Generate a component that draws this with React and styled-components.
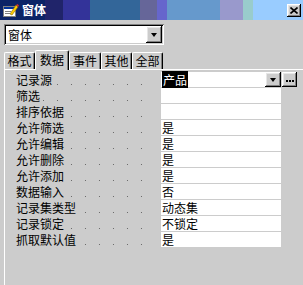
import React from 'react';
import styled, { createGlobalStyle } from 'styled-components';

const Global = createGlobalStyle`
  html, body {
    margin: 0;
    padding: 0;
    background: #cccccc;
  }
  body {
    font-family: "Noto Sans CJK SC", "Noto Sans", sans-serif;
    font-size: 12px;
    color: #000;
  }
`;

const Window = styled.div`
  width: 303px;
  height: 285px;
  background: #cccccc;
  overflow: hidden;
`;

const TitleBar = styled.div`
  height: 20px;
  display: flex;
  align-items: center;
  padding-left: 3px;
  background: linear-gradient(to right,
    #0c2466 0 45px, #20246a 45px 63px, #333399 63px 90px, #336699 90px 140px,
    #666699 140px 157px, #6666cc 157px 167px, #6699cc 167px 220px,
    #9999cc 220px 243px, #99cccc 243px 253px, #99ccff 253px);
`;

const Title = styled.span`
  color: #fff;
  font-weight: bold;
  font-size: 12px;
  line-height: 20px;
  margin-left: 3px;
  flex: 1;
`;

const raised = `
  background: #cccccc;
  box-shadow: inset -1px -1px #000, inset 1px 1px #fff, inset -2px -2px #808080, inset 2px 2px #e6e6e6;
`;

const CloseBtn = styled.div`
  ${raised}
  width: 14px;
  height: 13px;
  margin-right: 2px;
  display: flex;
  align-items: center;
  justify-content: center;
`;

const Body = styled.div`
  padding: 4px 0 0 4px;
`;

const Combo = styled.div`
  width: 160px;
  height: 21px;
  box-sizing: border-box;
  background: #fff;
  box-shadow: inset 1px 1px #808080, inset -1px -1px #fff, inset 2px 2px #000, inset -2px -2px #cccccc;
  display: flex;
  align-items: center;
  padding: 2px;
`;

const ComboText = styled.span`
  flex: 1;
  padding-left: 2px;
  line-height: 17px;
`;

const DropBtn = styled.div`
  ${raised}
  width: ${p => p.$w || 16}px;
  height: ${p => p.$h || 17}px;
  display: flex;
  align-items: center;
  justify-content: center;
  flex-shrink: 0;
`;

const Arrow = styled.div`
  width: 0;
  height: 0;
  border-left: 3.5px solid transparent;
  border-right: 3.5px solid transparent;
  border-top: 4px solid #000;
  margin-top: 1px;
`;

const Tabs = styled.div`
  display: flex;
  align-items: flex-end;
  margin-top: 5px;
  height: 19px;
`;

const Tab = styled.div`
  width: ${p => p.$w}px;
  height: ${p => (p.$active ? 20 : 17)}px;
  box-sizing: border-box;
  background: #cccccc;
  border-top: 1px solid #fff;
  border-left: 1px solid #fff;
  border-right: 1px solid #000;
  border-radius: 2px 2px 0 0;
  box-shadow: inset -1px 0 #808080;
  display: flex;
  justify-content: center;
  align-items: flex-start;
  line-height: 15px;
  padding-top: ${p => (p.$active ? 1 : 0)}px;
  position: relative;
  z-index: ${p => (p.$active ? 2 : 1)};
  margin-bottom: ${p => (p.$active ? -1 : 0)}px;
`;

const Panel = styled.div`
  border-top: 1px solid #fff;
  border-left: 1px solid #fff;
  padding-top: 2px;
  height: 230px;
`;

const Row = styled.div`
  display: flex;
  height: 16px;
`;

const Label = styled.div`
  width: 156px;
  display: flex;
  padding-left: 11px;
  box-sizing: border-box;
  line-height: 16px;
  white-space: nowrap;
`;

const Leader = styled.div`
  flex: 1;
  height: 1px;
  align-self: flex-end;
  margin: 0 14px 3px 3px;
  background-image: linear-gradient(to right, #6a6a6a 0 1px, transparent 1px 14px);
  background-size: 14px 1px;
  background-position: 1px 0;
  background-attachment: fixed;
`;

const Value = styled.div`
  width: 120px;
  height: 15px;
  background: #fff;
  display: flex;
  align-items: center;
  line-height: 15px;
  padding-left: 1px;
  box-sizing: border-box;
`;

const ValueText = styled.span`
  flex: 1;
`;

const Selected = styled.span`
  background: #000;
  color: #fff;
  padding: 0 1px;
`;

const BuildBtn = styled(DropBtn)`
  margin-left: 1px;
  gap: 1px;
`;

const Dot = styled.i`
  width: 2px;
  height: 2px;
  background: #000;
  margin-top: 2px;
`;

const tabs = [
  { name: '格式', w: 31 },
  { name: '数据', w: 34, active: true },
  { name: '事件', w: 32 },
  { name: '其他', w: 31 },
  { name: '全部', w: 31 },
];

const rows = [
  ['记录源', '产品'],
  ['筛选', ''],
  ['排序依据', ''],
  ['允许筛选', '是'],
  ['允许编辑', '是'],
  ['允许删除', '是'],
  ['允许添加', '是'],
  ['数据输入', '否'],
  ['记录集类型', '动态集'],
  ['记录锁定', '不锁定'],
  ['抓取默认值', '是'],
];

function FormIcon() {
  return (
    <svg width="16" height="15" viewBox="0 0 16 15">
      <rect x="0.5" y="3.5" width="12" height="10" fill="#fff" stroke="#808080" />
      <rect x="1" y="4" width="11" height="2" fill="#003399" />
      <line x1="2" y1="8.5" x2="8" y2="8.5" stroke="#808080" />
      <line x1="2" y1="10.5" x2="7" y2="10.5" stroke="#808080" />
      <polygon points="7,11 9,12 15,4 13,2" fill="#ffcc00" stroke="#806600" strokeWidth="0.6" />
      <polygon points="13,2 15,4 16,2.5 14.5,1" fill="#cc3333" />
    </svg>
  );
}

export default function App() {
  return (
    <Window>
      <Global />
      <TitleBar>
        <FormIcon />
        <Title>窗体</Title>
        <CloseBtn>
          <svg width="8" height="7" viewBox="0 0 8 7">
            <path d="M0.5 0.5 L7.5 6.5 M7.5 0.5 L0.5 6.5" stroke="#000" strokeWidth="1.6" />
          </svg>
        </CloseBtn>
      </TitleBar>
      <Body>
        <Combo>
          <ComboText>窗体</ComboText>
          <DropBtn><Arrow /></DropBtn>
        </Combo>
        <Tabs>
          {tabs.map(t => (
            <Tab key={t.name} $w={t.w} $active={t.active}>{t.name}</Tab>
          ))}
        </Tabs>
        <Panel>
          {rows.map(([label, value], i) => (
            <Row key={label}>
              <Label>
                {label}
                <Leader />
              </Label>
              <Value>
                <ValueText>{i === 0 ? <Selected>{value}</Selected> : value}</ValueText>
                {i === 0 && <DropBtn $w={16} $h={15}><Arrow /></DropBtn>}
              </Value>
              {i === 0 && (
                <BuildBtn $w={15} $h={15}>
                  <Dot /><Dot /><Dot />
                </BuildBtn>
              )}
            </Row>
          ))}
        </Panel>
      </Body>
    </Window>
  );
}
